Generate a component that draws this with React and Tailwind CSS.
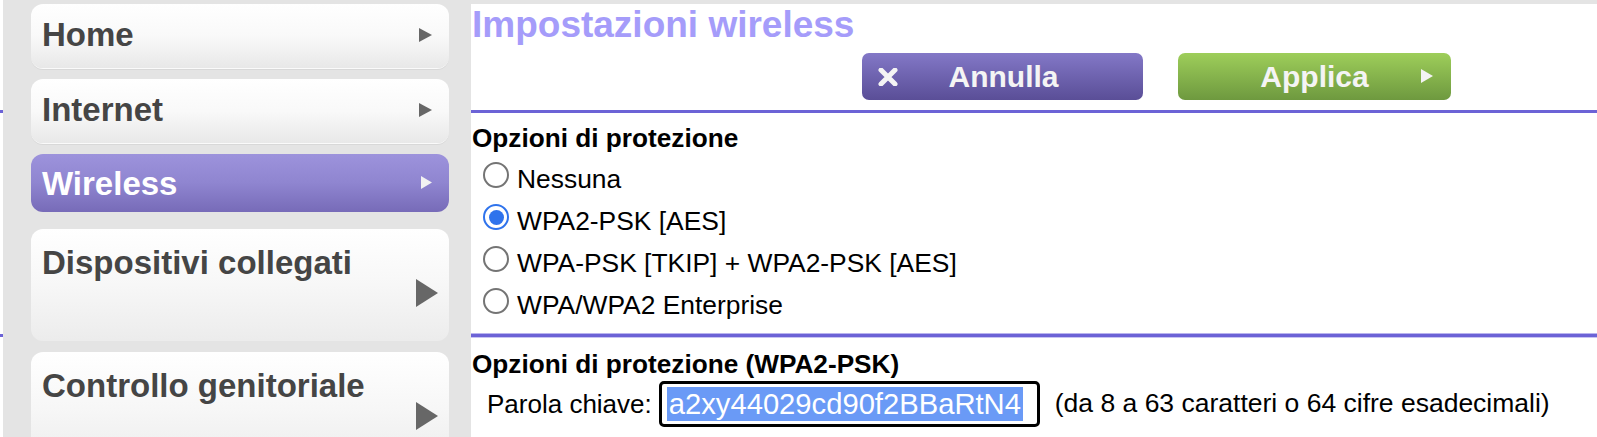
import React from "react";

const FONT = { fontFamily: '"Liberation Sans", Arial, sans-serif' };

function Arrow({ w, h, color }) {
  return (
    <svg width={w} height={h} viewBox={`0 0 ${w} ${h}`} className="block">
      <polygon points={`0,0 ${w},${h / 2} 0,${h}`} fill={color} />
    </svg>
  );
}

function NavSmall({ label, active, mt, h, lead }) {
  const base = active
    ? "bg-linear-to-b from-[#9d93dc] via-[#8f85d0] to-[#776bb8] text-white"
    : "bg-linear-to-b from-white via-[#f9f9f9] to-[#e8e8e8] text-[#454545] shadow-[0_1px_0_#fafafa,0_2px_0_#d8d8d8]";
  return (
    <div className={`${mt} ml-[28px] w-[418px] ${h} shrink-0 rounded-[12px] ${base} flex items-start justify-between pl-[11px] pr-[17px]`}>
      <span className={`text-[33px] font-bold ${lead} whitespace-nowrap`}>{label}</span>
      <div className={active ? "mt-[22px]" : "mt-[24px]"}>
        {active ? <Arrow w={11} h={13} color="#f2f2f2" /> : <Arrow w={13} h={14} color="#676767" />}
      </div>
    </div>
  );
}

function NavBig({ label, mt }) {
  return (
    <div className={`${mt} ml-[28px] w-[418px] h-[112px] shrink-0 rounded-[12px] bg-linear-to-b from-white via-[#f7f7f7] to-[#ececec] text-[#454545] flex flex-col pl-[11px] pr-[11px] pt-[15px]`}>
      <span className="text-[33px] font-bold leading-[38px] whitespace-nowrap">{label}</span>
      <div className="self-end mt-[-3px]">
        <Arrow w={22} h={28} color="#676767" />
      </div>
    </div>
  );
}

function Radio({ checked, label }) {
  return (
    <div className="flex items-start h-[42px] shrink-0 pl-[12px]">
      {checked ? (
        <div className="mt-[4px] w-[26px] h-[26px] rounded-full border-2 border-[#2f73ec] bg-white flex items-center justify-center">
          <div className="w-[15px] h-[15px] rounded-full bg-[#2f73ec]" />
        </div>
      ) : (
        <div className="mt-[4px] w-[26px] h-[26px] rounded-full border-2 border-[#747474] bg-white" />
      )}
      <span className="ml-[8px] text-[26.4px] leading-[42px] text-black whitespace-nowrap">{label}</span>
    </div>
  );
}

export default function App() {
  return (
    <div className="w-[1597px] h-[437px] overflow-hidden bg-white flex" style={FONT}>
      {/* left edge strip */}
      <div className="w-[3px] shrink-0 flex flex-col">
        <div className="h-[110px] shrink-0" />
        <div className="h-[3px] shrink-0 bg-[#6c63d6]" />
        <div className="h-[221px] shrink-0" />
        <div className="h-[3px] shrink-0 bg-[#6c63d6]" />
      </div>

      {/* sidebar */}
      <div className="w-[468px] shrink-0 bg-[#e4e4e4] flex flex-col">
        <NavSmall label="Home" mt="mt-[4px]" h="h-[64px]" lead="leading-[61px]" />
        <NavSmall label="Internet" mt="mt-[11px]" h="h-[64px]" lead="leading-[61px]" />
        <NavSmall label="Wireless" active mt="mt-[11px]" h="h-[58px]" lead="leading-[60px]" />
        <NavBig label="Dispositivi collegati" mt="mt-[17px]" />
        <NavBig label="Controllo genitoriale" mt="mt-[11px]" />
      </div>

      {/* main */}
      <div className="flex-1 flex flex-col">
        <div className="h-[4px] shrink-0 bg-[#e4e4e4]" />
        <div className="mt-[2px] pl-[1px] text-[37px] font-bold leading-[37px] text-[#a59cfa] whitespace-nowrap">
          Impostazioni wireless
        </div>
        <div className="mt-[10px] h-[47px] shrink-0 flex pl-[391px] gap-[35px]">
          <div className="relative w-[281px] h-[47px] rounded-[7px] bg-linear-to-b from-[#8378c7] to-[#5a4e97] flex items-center justify-center">
            <svg width="20" height="18" viewBox="0 0 20 18" className="absolute left-[16px] top-[15px]">
              <path d="M3 2 L17 16 M17 2 L3 16" stroke="#f4f4f4" strokeWidth="5" strokeLinecap="round" />
            </svg>
            <span className="text-[30px] font-bold text-[#f4f4f4] leading-none pl-[2px]">Annulla</span>
          </div>
          <div className="relative w-[273px] h-[47px] rounded-[7px] bg-linear-to-b from-[#9ece5a] to-[#6e993f] flex items-center justify-center">
            <span className="text-[30px] font-bold text-[#f4f4f4] leading-none">Applica</span>
            <div className="absolute right-[18px] top-[16px]">
              <Arrow w={12} h={14} color="#f4f4f4" />
            </div>
          </div>
        </div>
        <div className="mt-[10px] h-[3px] shrink-0 bg-[#6c63d6]" />

        <div className="mt-[10px] pl-[1px] text-[26.2px] font-bold leading-[30px] text-black whitespace-nowrap">
          Opzioni di protezione
        </div>
        <div className="mt-[5px] flex flex-col">
          <Radio label="Nessuna" />
          <Radio checked label="WPA2-PSK [AES]" />
          <Radio label="WPA-PSK [TKIP] + WPA2-PSK [AES]" />
          <Radio label="WPA/WPA2 Enterprise" />
        </div>

        <div className="mt-[7px] h-[5px] shrink-0 bg-[#6c63d6] border-t border-b border-t-[#b9b4ee] border-b-[#c8c4f2]" />

        <div className="mt-[11px] pl-[1px] text-[26.2px] font-bold leading-[30px] text-black whitespace-nowrap">
          Opzioni di protezione (WPA2-PSK)
        </div>
        <div className="mt-[2px] flex items-center pl-[16px]">
          <span className="text-[26px] text-black whitespace-nowrap">Parola chiave:</span>
          <div className="ml-[7px] w-[381px] h-[46px] shrink-0 border-[3px] border-black rounded-[5px] bg-white flex items-center pl-[5px]">
            <span className="bg-[#6a9af6] text-white text-[29.2px] leading-[34px] px-[2px] whitespace-nowrap">a2xy44029cd90f2BBaRtN4</span>
          </div>
          <span className="ml-[15px] text-[26.5px] text-black whitespace-nowrap">(da 8 a 63 caratteri o 64 cifre esadecimali)</span>
        </div>
      </div>
    </div>
  );
}
